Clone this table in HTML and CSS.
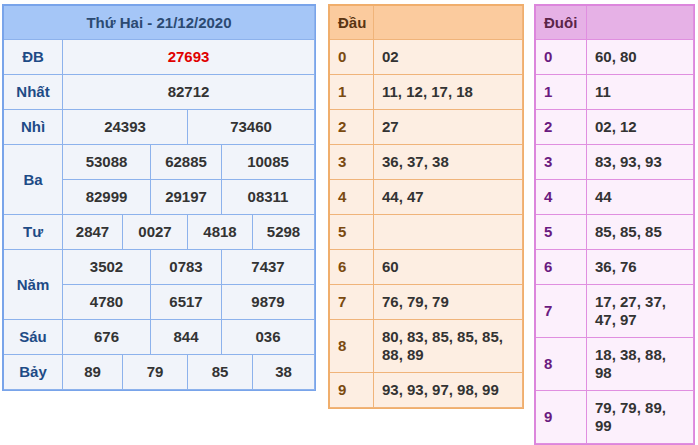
FILE: index.html
```html
<!DOCTYPE html>
<html lang="vi">
<head>
<meta charset="utf-8">
<title>Kết quả xổ số</title>
<link rel="stylesheet" href="styles.css">
</head>
<body>
<div class="wrap">
  <div class="kq">
    <div class="kq-head">Thứ Hai - 21/12/2020</div>

    <div class="lb">ĐB</div>
    <div class="v s6 red">27693</div>

    <div class="lb">Nhất</div>
    <div class="v s6">82712</div>

    <div class="lb">Nhì</div>
    <div class="v s3">24393</div>
    <div class="v s3">73460</div>

    <div class="lb r2">Ba</div>
    <div class="v s2">53088</div>
    <div class="v s2">62885</div>
    <div class="v s2">10085</div>
    <div class="v s2">82999</div>
    <div class="v s2">29197</div>
    <div class="v s2">08311</div>

    <div class="lb">Tư</div>
    <div class="v">2847</div>
    <div class="v s2">0027</div>
    <div class="v s2">4818</div>
    <div class="v">5298</div>

    <div class="lb r2">Năm</div>
    <div class="v s2">3502</div>
    <div class="v s2">0783</div>
    <div class="v s2">7437</div>
    <div class="v s2">4780</div>
    <div class="v s2">6517</div>
    <div class="v s2">9879</div>

    <div class="lb">Sáu</div>
    <div class="v s2">676</div>
    <div class="v s2">844</div>
    <div class="v s2">036</div>

    <div class="lb">Bảy</div>
    <div class="v">89</div>
    <div class="v s2">79</div>
    <div class="v s2">85</div>
    <div class="v">38</div>
  </div>

  <div class="lt dau">
    <div class="h">Đầu</div><div class="h"></div>
    <div class="k">0</div><div class="n">02</div>
    <div class="k">1</div><div class="n">11, 12, 17, 18</div>
    <div class="k">2</div><div class="n">27</div>
    <div class="k">3</div><div class="n">36, 37, 38</div>
    <div class="k">4</div><div class="n">44, 47</div>
    <div class="k">5</div><div class="n"></div>
    <div class="k">6</div><div class="n">60</div>
    <div class="k">7</div><div class="n">76, 79, 79</div>
    <div class="k">8</div><div class="n">80, 83, 85, 85, 85, 88, 89</div>
    <div class="k">9</div><div class="n">93, 93, 97, 98, 99</div>
  </div>

  <div class="lt duoi">
    <div class="h">Đuôi</div><div class="h"></div>
    <div class="k">0</div><div class="n">60, 80</div>
    <div class="k">1</div><div class="n">11</div>
    <div class="k">2</div><div class="n">02, 12</div>
    <div class="k">3</div><div class="n">83, 93, 93</div>
    <div class="k">4</div><div class="n">44</div>
    <div class="k">5</div><div class="n">85, 85, 85</div>
    <div class="k">6</div><div class="n">36, 76</div>
    <div class="k">7</div><div class="n">17, 27, 37, 47, 97</div>
    <div class="k">8</div><div class="n">18, 38, 88, 98</div>
    <div class="k">9</div><div class="n">79, 79, 89, 99</div>
  </div>
</div>
</body>
</html>
```

FILE: styles.css
```css
* { box-sizing: border-box; }

html, body {
  margin: 0;
  background: #ffffff;
}

body {
  padding: 4px 0 0 2px;
  font-family: "Liberation Sans", Arial, sans-serif;
  font-size: 15px;
  font-weight: bold;
  line-height: 18px;
  color: #333333;
}

.wrap {
  display: flex;
  align-items: flex-start;
}

/* ---------- Left results table ---------- */
.kq {
  display: grid;
  grid-template-columns: 59px 60px 28px 37px 34px 31px 62px;
  grid-template-rows: 34px;
  grid-auto-rows: 35px;
  border-top: 2px solid #79a4ea;
  border-left: 2px solid #79a4ea;
  border-right: 1px solid #79a4ea;
  border-bottom: 1px solid #79a4ea;
  background: #f1f4fa;
  margin-right: 12px;
}

.kq > div {
  display: flex;
  align-items: center;
  justify-content: center;
  border-right: 1px solid #8db2ec;
  border-bottom: 1px solid #8db2ec;
}

.kq-head {
  grid-column: span 7;
  background: #a5c6f7;
  color: #2b4a72;
}

.lb { color: #1e4b86; }
.r2 { grid-row: span 2; }
.s2 { grid-column: span 2; }
.s3 { grid-column: span 3; }
.s6 { grid-column: span 6; }
.v { color: #333333; }
.red { color: #e00000; }

/* ---------- Loto tables ---------- */
.lt {
  display: grid;
  border-top: 2px solid;
  border-left: 2px solid;
  border-right: 1px solid;
  border-bottom: 1px solid;
}

.lt > div {
  padding: 8px 8px;
  border-right: 1px solid;
  border-bottom: 1px solid;
  display: flex;
  align-items: center;
}

.lt > .h {
  padding: 8px 8px 7px;
  min-height: 34px;
}

.dau {
  grid-template-columns: 44px 149px;
  border-color: #f0ae6c;
  background: #fdeee2;
  margin-right: 10px;
}
.dau > div { border-color: #f0b47a; }
.dau > .h { background: #fbcb9e; color: #5a3512; }
.dau > .k { color: #7a4a10; }

.duoi {
  grid-template-columns: 51px 107px;
  border-color: #dc86dc;
  background: #fcf0fc;
}
.duoi > div { border-color: #e08fe0; }
.duoi > .h { background: #e6b1e6; color: #5a2448; }
.duoi > .k { color: #6a1a80; }
```
